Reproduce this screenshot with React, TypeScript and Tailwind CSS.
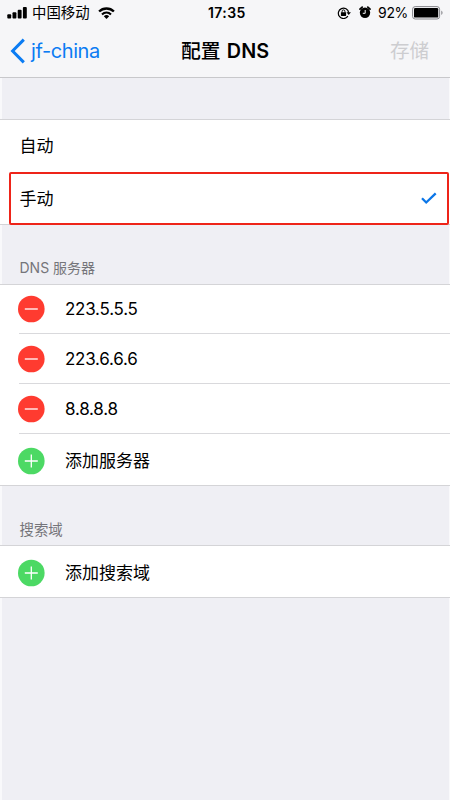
import React from "react";
import clsx from "clsx";

const servers = ["223.5.5.5", "223.6.6.6", "8.8.8.8"];

const StatusBar = () => (
  <div className="flex h-[25px] items-center pl-[5px] pr-[6px] text-black">
    <svg width="20" height="12" viewBox="0 0 20 12" className="shrink-0">
      <rect x="0.3" y="7.3" width="3.9" height="4.2" rx="0.9" />
      <rect x="5.5" y="5.3" width="3.9" height="6.2" rx="0.9" />
      <rect x="10.7" y="2.8" width="3.9" height="8.7" rx="0.9" />
      <rect x="15.9" y="0" width="3.9" height="11.5" rx="0.9" />
    </svg>
    <span className="ml-[5px] w-[58px] whitespace-nowrap text-[14.4px] leading-5">
      中国移动
    </span>
    <svg width="17" height="12" viewBox="0 0 17 12" fill="none" stroke="#000" className="ml-[8px] shrink-0">
      <path d="M1.1 4.5a10.5 10.5 0 0 1 14.8 0" strokeWidth="2.4" />
      <path d="M4 7.4a6.4 6.4 0 0 1 9 0" strokeWidth="2.1" />
      <path d="M8.5 12 5.8 9.3a3.9 3.9 0 0 1 5.4 0Z" fill="#000" stroke="none" />
    </svg>
    <span className="ml-[93px] w-[40px] whitespace-nowrap text-[14px] font-semibold leading-5 tracking-[0.4px]">
      17:35
    </span>
    {/* rotation lock */}
    <svg width="14" height="12" viewBox="0 0 14 12" fill="none" stroke="#000" className="ml-[89px] shrink-0">
      <path d="M10.9 9.2A5.2 5.2 0 1 1 11.7 5.6" strokeWidth="1.2" />
      <path d="M9.5 5.2h4.4L11.7 8Z" fill="#000" stroke="none" />
      <rect x="3.9" y="5.2" width="5.2" height="3.7" rx="0.4" fill="#000" stroke="none" />
      <path d="M5.1 5.6V4.3a1.4 1.4 0 0 1 2.8 0v1.3" strokeWidth="1" />
    </svg>
    {/* alarm */}
    <svg width="12" height="13" viewBox="0 0 12 13" fill="none" className="ml-[8px] shrink-0">
      <circle cx="6" cy="6.8" r="5.2" fill="#000" />
      <path d="M1 3.1 3.2 1.1M11 3.1 8.8 1.1" stroke="#000" strokeWidth="1.8" strokeLinecap="round" />
      <path d="M6.2 4v3.3H3.8" stroke="#f7f7f9" strokeWidth="1" />
    </svg>
    <span className="ml-[7px] w-[30px] whitespace-nowrap text-[14px] leading-5 tracking-[-0.3px]">
      92%
    </span>
    <svg width="32" height="14" viewBox="0 0 32 14" className="ml-[4px] shrink-0">
      <rect x="0.6" y="0.6" width="27" height="12.4" rx="2.6" fill="none" stroke="#85858a" strokeWidth="1" />
      <rect x="2" y="2" width="24.2" height="9.6" rx="1.2" />
      <path d="M29.3 4.6c1.7.7 1.7 3.7 0 4.4Z" fill="#85858a" />
    </svg>
  </div>
);

const NavBar = () => (
  <div className="flex h-[52px] items-center pl-[8px] pr-[20px]">
    <svg width="15" height="26" viewBox="0 0 15 26" fill="none" className="shrink-0">
      <path d="M13.8 1.6 2.6 13l11.2 11.4" stroke="#0b7cf3" strokeWidth="3" />
    </svg>
    <span className="ml-[6px] w-[150px] whitespace-nowrap text-[20px] leading-7 tracking-[-0.4px] text-[#0b7cf3]">
      jf-china
    </span>
    <h1 className="w-[209px] whitespace-nowrap text-[19.8px] font-medium leading-7 text-black">
      配置 <span className="ml-px font-semibold">DNS</span>
    </h1>
    <span className="whitespace-nowrap text-[19.6px] leading-7 text-[#cdcdd0]">存储</span>
  </div>
);

const RoundIcon = ({ add }: { add?: boolean }) => (
  <svg width="28" height="28" viewBox="0 0 28 28" fill="none" className="shrink-0">
    <circle cx="14.3" cy="14" r="13.3" fill={add ? "#4cd964" : "#ff3b30"} />
    <path d={add ? "M7.8 14h13M14.3 7.5v13" : "M7.8 14h13"} stroke="#fff" strokeWidth="1.3" />
  </svg>
);

const Row = ({ label, add, first }: { label: string; add?: boolean; first?: boolean }) => (
  <div className="bg-white pl-[17px]">
    <div className={clsx("flex items-center", add ? "h-[51px] pt-0.5" : first ? "h-[48px]" : "h-[49px]")}>
      <RoundIcon add={add} />
      <span
        className={clsx(
          "ml-[20px] whitespace-nowrap text-[17px] leading-6 text-black",
          !add && "tracking-[-0.25px]"
        )}
      >
        {label}
      </span>
    </div>
    {!add && <div className="ml-[2px] h-px bg-[#d9d9dc]" />}
  </div>
);

export default function App() {
  return (
    <main className="h-[800px] w-[450px] overflow-hidden bg-[#efeff4] font-[Inter,'Noto_Sans_CJK_SC',sans-serif]">
      <div className="h-full border-l-2 border-r border-[#f9f9fb]">
        <header className="-mx-0.5 h-[78px] border-b border-[#c8c8cb] bg-[#f6f6f8] pl-0.5">
          <StatusBar />
          <NavBar />
        </header>

        <section className="-ml-0.5 -mr-px mt-[41px] border-y border-[#d4d4d7] bg-white">
          <div className="flex h-[52px] items-center pl-[19.5px] pt-px text-[17px] text-black">自动</div>
          {/* selected option */}
          <div className="-mb-px ml-[9px] mr-px flex h-[53px] items-center justify-between rounded-[2px] border-2 border-[#ee2419] pl-[8.5px] pr-[10px] text-[17px] text-black">
            <span className="pt-0.5">手动</span>
            <svg width="16" height="13" viewBox="0 0 16 13" fill="none">
              <path d="m1 6.3 4.2 4.2L14.7 1.3" stroke="#0b76e8" strokeWidth="2.3" />
            </svg>
          </div>
        </section>

        <h2 className="flex h-[59px] items-end pb-[6px] pl-[17.5px] text-[14px] leading-5 text-[#75757a]">
          DNS 服务器
        </h2>
        <section className="-ml-0.5 -mr-px border-y border-[#d4d4d7]">
          {servers.map((ip, i) => (
            <Row key={ip} label={ip} first={i === 0} />
          ))}
          <Row label="添加服务器" add />
        </section>

        <h2 className="flex h-[59px] items-end pb-[5px] pl-[17.5px] text-[14.4px] leading-5 text-[#75757a]">
          搜索域
        </h2>
        <section className="-ml-0.5 -mr-px border-y border-[#d4d4d7]">
          <Row label="添加搜索域" add />
        </section>
      </div>
    </main>
  );
}
